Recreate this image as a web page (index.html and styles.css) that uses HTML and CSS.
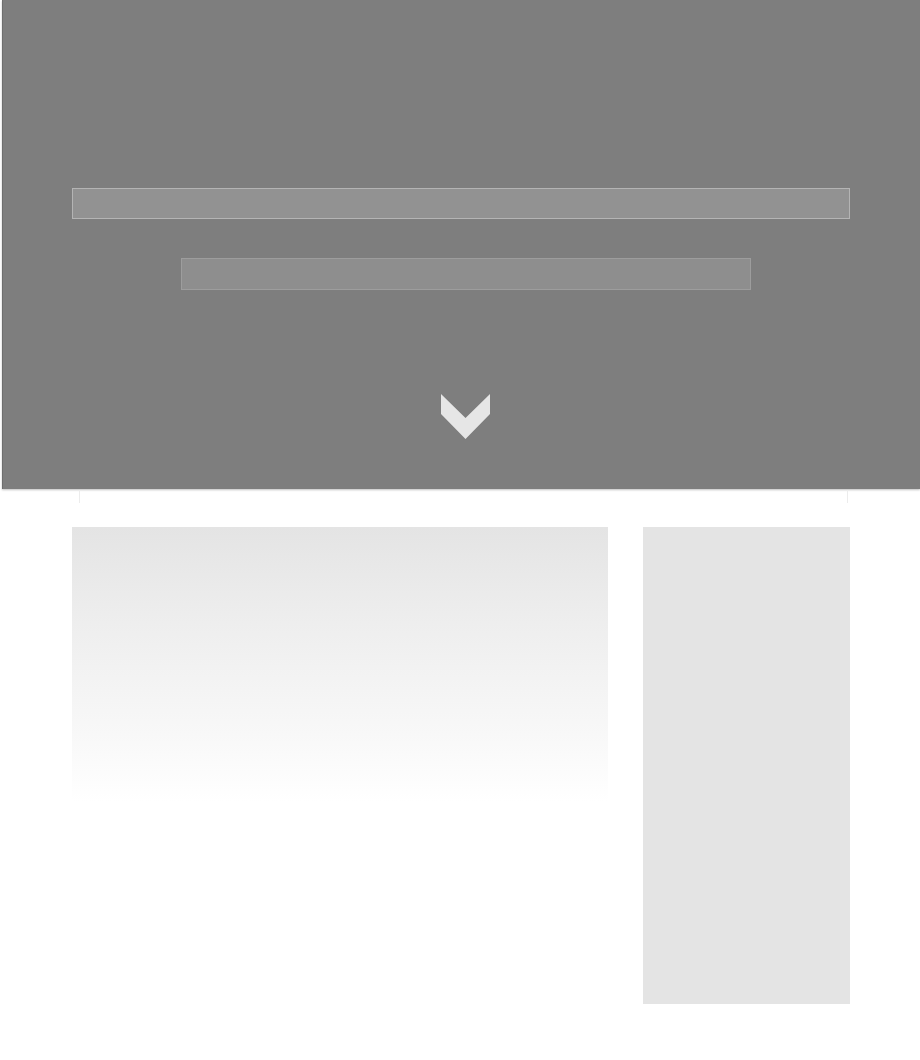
FILE: index.html
```html
<!DOCTYPE html>
<html lang="en">
<head>
    <meta charset="UTF-8">
    <meta name="viewport" content="width=device-width, initial-scale=1.0">
    <title>Loading</title>
    <link rel="stylesheet" href="styles.css">
</head>
<body>
    <header class="hero">
        <div class="hero-inner">
            <div class="bar bar-title"></div>
            <div class="bar bar-subtitle"></div>
            <div class="scroll-down">
                <svg width="49" height="45" viewBox="0 0 49 45">
                    <polygon points="0,0 24.5,24 49,0 49,20 24.5,45 0,20" fill="#e6e6e6"/>
                </svg>
            </div>
        </div>
    </header>

    <div class="rail"></div>

    <main class="container">
        <div class="content-card"></div>
        <aside class="sidebar"></aside>
    </main>
</body>
</html>
```

FILE: styles.css
```css
:root {
    --hero-color: #7e7e7e;
    --bar-color: #929292;
    --skeleton-color: #e4e4e4;
}

body {
    font-family: 'Liberation Sans', Arial, sans-serif;
    margin: 0;
    padding: 0;
    background-color: #fff;
}

.hero {
    margin-left: 2px;
    height: 489px;
    background-color: var(--hero-color);
    border-left: 1px solid #6e6e6e;
    box-shadow: 0 1px 2px rgba(0,0,0,0.25);
    box-sizing: border-box;
}

.hero-inner {
    width: 778px;
    margin-left: 69px;
    padding-top: 188px;
}

.bar {
    background-color: var(--bar-color);
    border: 1px solid #b4b4b4;
    box-sizing: border-box;
}

.bar-title {
    height: 31px;
}

.bar-subtitle {
    width: 570px;
    height: 32px;
    margin: 39px 0 0 109px;
    background-color: #8e8e8e;
    border-color: #9d9d9d;
}

.scroll-down {
    display: flex;
    justify-content: center;
    margin-top: 104px;
    padding-left: 8px;
}

.scroll-down svg {
    display: block;
}

.rail {
    width: 767px;
    height: 13px;
    margin: 1px 0 0 79px;
    border-left: 1px solid #ececec;
    border-right: 1px solid #ececec;
}

.container {
    display: flex;
    gap: 35px;
    margin: 24px 0 0 72px;
    width: 778px;
    align-items: flex-start;
}

.content-card {
    width: 536px;
    height: 275px;
    background: linear-gradient(to bottom, var(--skeleton-color) 0%, #eeeeee 35%, #f8f8f8 75%, #ffffff 100%);
}

.sidebar {
    width: 207px;
    height: 477px;
    background-color: var(--skeleton-color);
}
```
